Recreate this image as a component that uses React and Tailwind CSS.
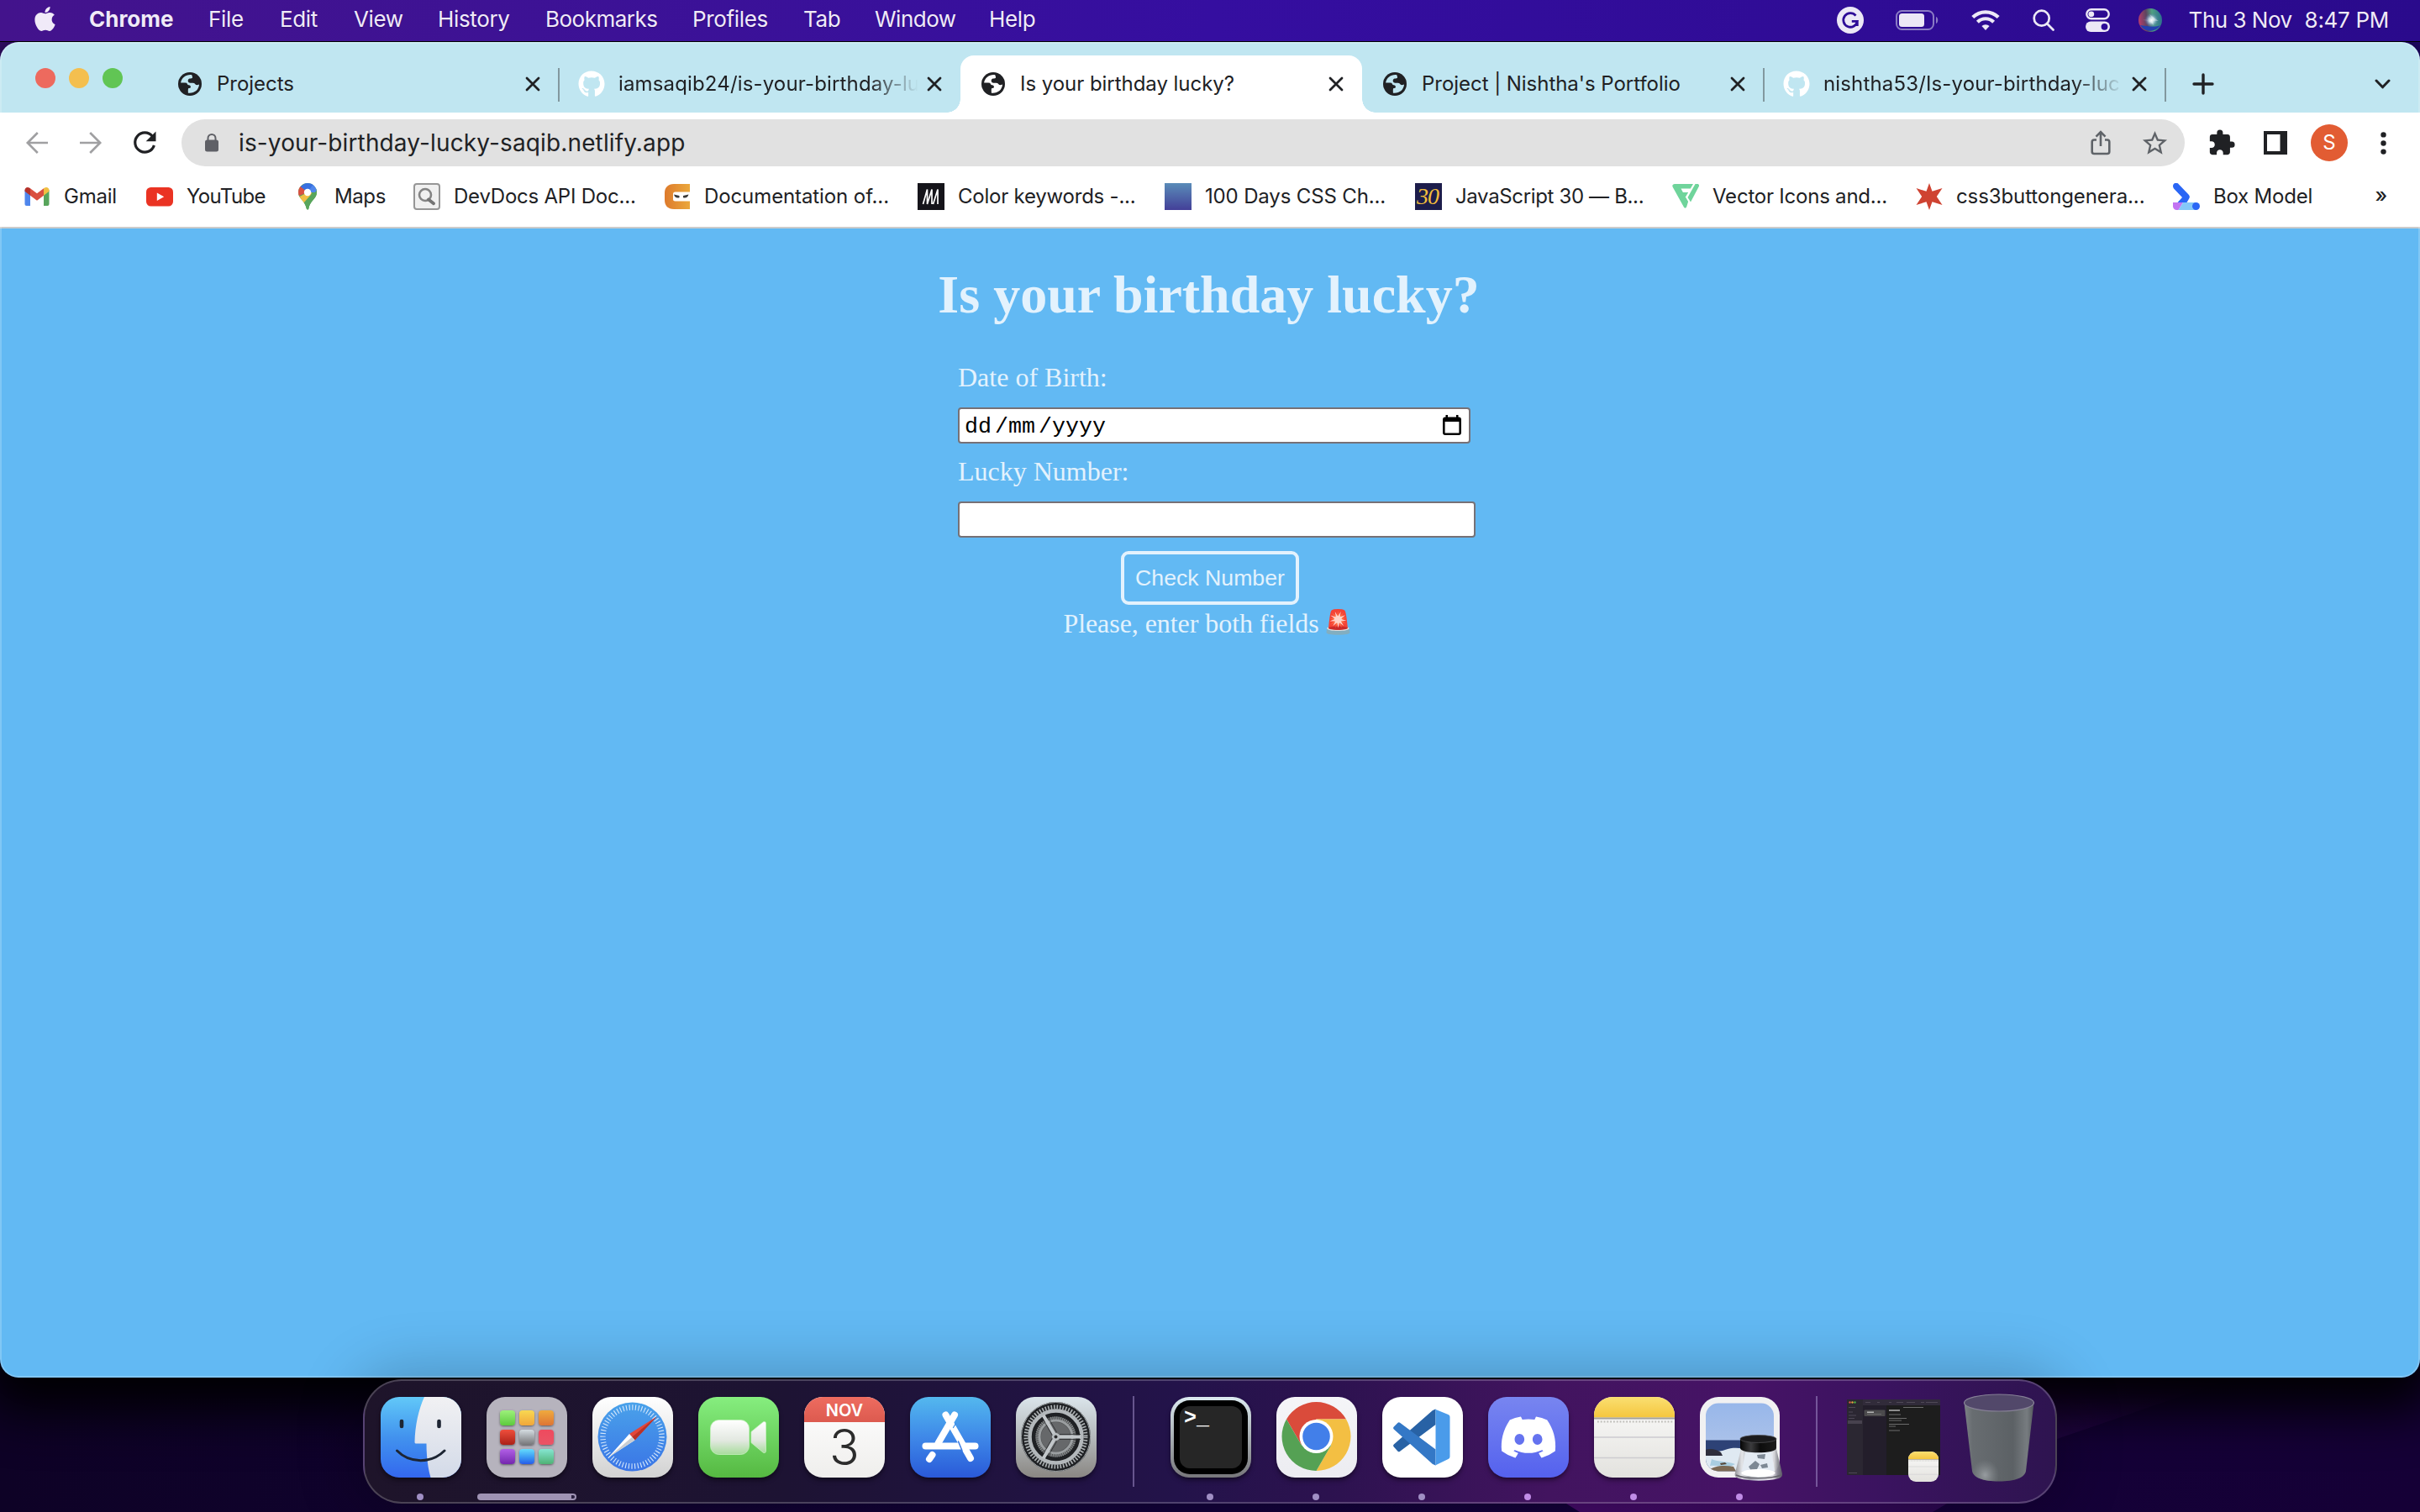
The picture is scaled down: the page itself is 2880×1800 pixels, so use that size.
import React from "react";
import { FaApple, FaGithub, FaDiscord } from "react-icons/fa";
import { MdStarBorder, MdExtension } from "react-icons/md";

/* ---------- menu bar ---------- */

const menus = [
  { label: "Chrome", box: "w-[142px] font-bold tracking-[0px]" },
  { label: "File", box: "w-[85px]" },
  { label: "Edit", box: "w-[88px]" },
  { label: "View", box: "w-[100px]" },
  { label: "History", box: "w-[128px]" },
  { label: "Bookmarks", box: "w-[175px] tracking-[-0.5px]" },
  { label: "Profiles", box: "w-[132px]" },
  { label: "Tab", box: "w-[85px]" },
  { label: "Window", box: "w-[136px] tracking-[-0.5px]" },
  { label: "Help", box: "w-[80px]" },
];

function MenuBar() {
  return (
    <header className="relative z-10 flex h-[50px] shrink-0 items-start border-b border-black bg-linear-to-r from-[#43138c] via-[#350ea0] to-[#2a0a8c] text-[26px] tracking-[-0.35px] text-[#f0eaf8] text-shadow-sm">
      <div className="flex h-[45px] w-[106px] shrink-0 items-center pl-[37px]">
        <FaApple className="size-[33px]" />
      </div>
      <nav className="flex h-[45px] items-center">
        {menus.map((m) => (
          <span key={m.label} className={m.box}>
            {m.label}
          </span>
        ))}
      </nav>
      <div className="ml-auto flex h-[47px] items-center pr-[37px]">
        <svg className="mr-[38px] size-8" viewBox="0 0 32 32">
          <circle cx="16" cy="16" r="16" fill="#ece8f6" />
          <path d="M22.5 10.6A8.3 8.3 0 1 0 24.3 17.4H17.8M24.3 17.4V23" fill="none" stroke="#2d0c97" strokeWidth="2.8" />
        </svg>
        <svg className="mr-[38px] h-6 w-[52px]" viewBox="0 0 52 24">
          <rect x="1" y="1" width="44" height="22" rx="6.5" fill="none" stroke="#8a7bc4" strokeWidth="2" />
          <rect x="4" y="4" width="30" height="16" rx="3.5" fill="#ece8f6" />
          <path d="M48 8c3 1 3 7 0 8z" fill="#8a7bc4" />
        </svg>
        <svg className="mr-[39px] h-[26px] w-[34px]" viewBox="0 0 34 26" fill="none" stroke="#ece8f6" strokeWidth="4.2">
          <path d="M1.8 9.6a21.5 21.5 0 0 1 30.4 0" />
          <path d="M7.4 15.2a13.6 13.6 0 0 1 19.2 0" />
          <path d="M17 25l-4.6-4.9a6.6 6.6 0 0 1 9.2 0z" fill="#ece8f6" stroke="none" />
        </svg>
        <svg className="mr-[37px] size-[26px]" viewBox="0 0 26 26" fill="none" stroke="#ece8f6" strokeWidth="2.7">
          <circle cx="10.7" cy="10.7" r="9" />
          <path d="M17.3 17.3l7.2 7.2" strokeLinecap="round" />
        </svg>
        <svg className="mr-[34px] h-7 w-[29px]" viewBox="0 0 29 28">
          <rect x="1.3" y="1.3" width="26.4" height="11" rx="5.5" fill="none" stroke="#ece8f6" strokeWidth="2.4" />
          <circle cx="6.8" cy="6.8" r="3.4" fill="#ece8f6" />
          <rect x="0" y="15.5" width="29" height="12.5" rx="6.2" fill="#ece8f6" />
          <circle cx="22.5" cy="21.8" r="3.9" fill="#2d0c97" />
        </svg>
        <svg className="mr-[32px] size-7" viewBox="0 0 28 28">
          <defs>
            <radialGradient id="siriCore" cx=".55" cy=".5" r=".3">
              <stop offset="0" stopColor="#fff" />
              <stop offset=".4" stopColor="#cfe3f0" stopOpacity=".8" />
              <stop offset="1" stopColor="#4a6ac0" stopOpacity="0" />
            </radialGradient>
            <linearGradient id="siriRim" x1="0" y1=".55" x2="1" y2=".45">
              <stop offset="0" stopColor="#b83c6c" />
              <stop offset=".35" stopColor="#5c4560" />
              <stop offset=".6" stopColor="#4fa082" />
              <stop offset="1" stopColor="#2c6f8e" />
            </linearGradient>
          </defs>
          <circle cx="14" cy="14" r="14" fill="url(#siriRim)" />
          <path d="M2 20a14 14 0 0 0 24 0c-6 3-16 1-24 0z" fill="#2440b0" />
          <circle cx="14" cy="14" r="14" fill="url(#siriCore)" />
          <path d="M5 14c5-1 8 0 13 6-1-6-2-9-5-13 6 4 9 7 11 8" fill="#fff" opacity=".35" />
        </svg>
        <span className="mr-[15px] tracking-[-0.5px]">Thu 3 Nov</span>
        <span className="tracking-[-0.3px]">8:47 PM</span>
      </div>
    </header>
  );
}

/* ---------- browser tabs ---------- */

function Globe() {
  return (
    <svg className="size-7" viewBox="0 0 28 28">
      <circle cx="14" cy="14" r="14" fill="#202124" />
      <path
        d="M16.2 3.2C9.6 2.4 4 6.5 3.1 12.6c2.2-.3 4.8-.2 7 .1.9.9.9 2.4 2.4 2.6 1.8.2 2.5.8 2.4 2.4-.1 1.2-1.3 1.3-2.600 1.300-.8 1.300-.4 3.600-.4 5.700 7 .9 12.800-3.700 13.100-10.200-1.300.4-2.400.9-3.700.5-1-.4-1.200-1.400-2.300-1.900-1.900-.5-4.500.2-6.300-.8-1.400-1-1.300-3.200-.1-4.300 1.300-.9 3.300-.1 4.300-1.200.5-1-.3-2.400-.6-3.600z"
        fill="currentColor"
      />
    </svg>
  );
}

function Cross() {
  return (
    <svg className="size-[18px] shrink-0" viewBox="0 0 18 18" stroke="#202124" strokeWidth="2.800" strokeLinecap="round">
      <path d="M2 2l14 14M16 2L2 16" />
    </svg>
  );
}

const tabs = [
  { title: "Projects", icon: "globe", rule: true },
  { title: "iamsaqib24/is-your-birthday-lu", icon: "github", fade: true },
  { title: "Is your birthday lucky?", icon: "globe", active: true },
  { title: "Project | Nishtha's Portfolio", icon: "globe", rule: true },
  { title: "nishtha53/Is-your-birthday-luc", icon: "github", fade: true, rule: true },
];

function Tab({ title, icon, active, fade, rule }) {
  return (
    <div
      className={
        "relative flex h-[68px] w-[478px] shrink-0 items-center pl-[23px] " +
        (active ? "rounded-t-2xl bg-white text-white" : "text-[#c0e6f1]")
      }
    >
      {active && (
        <>
          <i className="absolute bottom-0 -left-4 size-4 bg-[radial-gradient(circle_at_0_0,transparent_15.5px,white_16px)]" />
          <i className="absolute -right-4 bottom-0 size-4 bg-[radial-gradient(circle_at_100%_0,transparent_15.5px,white_16px)]" />
        </>
      )}
      <span className="flex w-8 shrink-0 items-center justify-center">
        {icon === "globe" ? <Globe /> : <FaGithub className="size-8 text-white" />}
      </span>
      <span
        className={
          "ml-4 w-[364px] shrink-0 text-2xl whitespace-nowrap text-[#202124] " +
          (fade ? "mask-r-from-82% mask-r-to-98% tracking-[0.15px]" : "tracking-[-0.04px]")
        }
      >
        {title}
      </span>
      <span className="ml-[3px] flex">
        <Cross />
      </span>
      {rule && <i className="absolute top-[15px] -right-[1px] h-10 w-0.5 bg-[#82989f]" />}
    </div>
  );
}

function TabStrip() {
  return (
    <div className="flex h-[84px] items-end bg-[#c0e6f1]">
      <div className="flex h-[84px] w-[187px] shrink-0 items-center gap-4 pt-[2px] pl-[42px]">
        <i className="size-6 rounded-full bg-[#ed6a5e]" />
        <i className="size-6 rounded-full bg-[#f4bf4f]" />
        <i className="size-6 rounded-full bg-[#61c554]" />
      </div>
      {tabs.map((t) => (
        <Tab key={t.title} {...t} />
      ))}
      <div className="flex h-[68px] grow items-center justify-between pr-[35px] pl-8">
        <svg className="size-[26px]" viewBox="0 0 26 26" stroke="#202124" strokeWidth="3.4" strokeLinecap="round">
          <path d="M13 2v22M2 13h22" />
        </svg>
        <svg className="h-3 w-[19px]" viewBox="0 0 19 12" fill="none" stroke="#202124" strokeWidth="3" strokeLinecap="round" strokeLinejoin="round">
          <path d="M2 2l7.500 7.800L17 2" />
        </svg>
      </div>
    </div>
  );
}

/* ---------- toolbar ---------- */

function Cell({ children }) {
  return <span className="flex w-16 shrink-0 items-center justify-center">{children}</span>;
}

function Toolbar() {
  return (
    <div className="flex h-[72px] items-center bg-white px-3">
      <Cell>
        <svg className="size-8" viewBox="0 0 32 32" fill="none" stroke="#a0a0a2" strokeWidth="2.6">
          <path d="M29 16H5M16.800 4L4.800 16l12 12" />
        </svg>
      </Cell>
      <Cell>
        <svg className="size-8" viewBox="0 0 32 32" fill="none" stroke="#a0a0a2" strokeWidth="2.6">
          <path d="M3 16h24M15.200 4l12 12-12 12" />
        </svg>
      </Cell>
      <Cell>
        <svg className="size-8" viewBox="0 0 32 32">
          <path d="M25.300 8.200A11.600 11.600 0 1 0 27.400 19" fill="none" stroke="#202124" strokeWidth="3.200" />
          <path d="M29.500 2.500v11.800H17.700z" fill="#202124" />
        </svg>
      </Cell>
      <div className="ml-3 flex h-14 w-[2384px] items-center rounded-full bg-[#e1e1e1] pr-1 pl-7">
        <svg className="h-[22px] w-4" viewBox="0 0 16 22">
          <path d="M3.500 9V5.500a4.500 4.500 0 0 1 9 0V9" fill="none" stroke="#5f6066" strokeWidth="2" />
          <rect y="7.500" width="16" height="14" rx="2.500" fill="#5f6066" />
        </svg>
        <span className="ml-6 grow text-[28px] tracking-[0.13px] text-[#202124]">is-your-birthday-lucky-saqib.netlify.app</span>
        <Cell>
          <svg className="h-8 w-6" viewBox="0 0 24 32" fill="none" stroke="#5f6368" strokeWidth="2.600">
            <path d="M7 12.500H4.200A2.500 2.500 0 0 0 1.700 15v11.500A2.500 2.500 0 0 0 4.200 29h15.600a2.500 2.500 0 0 0 2.500-2.500V15a2.500 2.500 0 0 0-2.500-2.500H17" />
            <path d="M12 20V3.500M6.500 8.600L12 3l5.500 5.600" />
          </svg>
        </Cell>
        <Cell>
          <MdStarBorder className="size-[35px] text-[#5f6368]" />
        </Cell>
      </div>
      <div className="ml-3 flex">
        <Cell>
          <MdExtension className="size-[34px] text-[#202124]" />
        </Cell>
        <Cell>
          <svg className="size-7" viewBox="0 0 28 28">
            <path d="M0 0h28v28H0zM4 4v20h15.500V4z" fill="#202124" fillRule="evenodd" />
          </svg>
        </Cell>
        <Cell>
          <span className="flex size-11 items-center justify-center rounded-full bg-[#e25c33] text-2xl text-white">S</span>
        </Cell>
        <Cell>
          <svg className="h-[27px] w-[7px]" viewBox="0 0 7 27" fill="#202124">
            <circle cx="3.500" cy="3.400" r="3.200" />
            <circle cx="3.500" cy="13.500" r="3.200" />
            <circle cx="3.500" cy="23.600" r="3.200" />
          </svg>
        </Cell>
      </div>
    </div>
  );
}

/* ---------- bookmarks ---------- */

const bookmarkIcons = {
  gmail: (
    <svg className="size-8" viewBox="0 0 32 32">
      <path d="M1.500 8v17a2 2 0 0 0 2 2H8V14z" fill="#4f86ec" />
      <path d="M30.500 8v17a2 2 0 0 1-2 2H24V14z" fill="#58a55c" />
      <path d="M1.500 8.500C1.500 5 5 4 7.300 5.800L8 6.300v8.400l-6.500-5z" fill="#b5312a" />
      <path d="M30.500 8.500C30.500 5 27 4 24.700 5.800L24 6.300v8.400l6.500-5z" fill="#f1bf42" />
      <path d="M8 6.300l8 6 8-6v8.400l-8 6-8-6z" fill="#d95040" />
    </svg>
  ),
  youtube: (
    <svg className="size-8" viewBox="0 0 32 32">
      <rect y="5" width="32" height="22.500" rx="5.500" fill="#ea3323" />
      <path d="M12.800 11.500l8.400 4.700-8.400 4.800z" fill="#fff" />
    </svg>
  ),
  maps: (
    <svg className="size-8" viewBox="0 0 32 32">
      <defs>
        <clipPath id="pin">
          <path d="M16 0a11 11 0 0 1 11 11c0 8-8.200 9.500-9.700 19.600-.3 1.600-2.300 1.600-2.600 0C13.200 20.500 5 19 5 11A11 11 0 0 1 16 0z" />
        </clipPath>
      </defs>
      <g clipPath="url(#pin)">
        <rect width="32" height="32" fill="#58a55c" />
        <path d="M4 16l12-5-8-8-6 3z" fill="#d95040" />
        <path d="M7.500 4L16 11 26 2 16-2z" fill="#3870e0" />
        <path d="M4 17.500L16 11l6-5-2 10-10 10z" fill="#f1bf42" />
        <path d="M28 5L11 24l5 8 12-8z" fill="#58a55c" />
        <path d="M16 11l7-10 7 3-5 7z" fill="#4f86ec" />
      </g>
      <circle cx="16" cy="11" r="4.200" fill="#fff" />
    </svg>
  ),
  devdocs: (
    <svg className="size-8" viewBox="0 0 32 32">
      <rect x="1" y="1" width="30" height="30" rx="3" fill="#f0f0f0" stroke="#969696" strokeWidth="2" />
      <circle cx="14" cy="14" r="7" fill="none" stroke="#848484" strokeWidth="2.600" />
      <path d="M18 19.500l6 4.800" stroke="#747474" strokeWidth="3.800" strokeLinecap="round" />
    </svg>
  ),
  ninja: (
    <svg className="size-8" viewBox="0 0 32 32">
      <defs>
        <linearGradient id="ninjaFill">
          <stop offset="0" stopColor="#dd7a2c" />
          <stop offset="1" stopColor="#eba83c" />
        </linearGradient>
      </defs>
      <path d="M31 1v9.500H13.500a2.500 2.500 0 0 0-2.500 2.500v6a2.500 2.500 0 0 0 2.500 2.500H31V31H12C5 31 1 27 1 20v-8C1 5 5 1 12 1z" fill="url(#ninjaFill)" />
      <path d="M12 13.500l6.500 1.500v2.200c-3.500.8-5.600-.4-6.500-3.700zM29.500 13.500L23 15v2.200c3.500.8 5.600-.4 6.500-3.700z" fill="#3b3b3b" />
    </svg>
  ),
  mdn: (
    <svg className="size-8" viewBox="0 0 32 32">
      <rect width="32" height="32" fill="#15141a" />
      <path d="M6.500 25l5-17.500v17.500L17 7.500V25M18.500 25L24 7.500V25" fill="none" stroke="#fff" strokeWidth="1.700" strokeLinejoin="bevel" />
    </svg>
  ),
  hundred: <i className="block size-8 bg-linear-to-b from-[#5a8cb8] to-[#433f98]" />,
  js30: (
    <span className="flex size-8 items-center justify-center bg-[#1d1d4b] pr-[2px] font-['Liberation_Serif'] text-[28px] leading-none tracking-[-1px] text-[#f2bd3b] italic">
      30
    </span>
  ),
  flaticon: (
    <svg className="size-8" viewBox="0 0 32 32" fill="#6fd49b">
      <path d="M3 1h22l-3.200 5.500H10.500l2.400 4.500h6.300l-3 5h-.6l3.500 6-2 6.500c-.6 1.500-2.600 1.500-3.200 0L.6 4.500C-.2 2.500 1 1 3 1z" />
      <path d="M27.500 1H30c1.800 0 2.400 1.500 1.800 3L22 22.500 18.500 17z" />
    </svg>
  ),
  spark: (
    <svg className="size-8" viewBox="0 0 32 32">
      <path d="M16 0l3.500 9.800L31.500 6l-6.700 10 6.700 10-12-3.800L16 32l-3.500-9.800L.5 26l6.700-10L.5 6l12 3.800z" fill="#cf4332" />
    </svg>
  ),
  box: (
    <svg className="size-8" viewBox="0 0 32 32">
      <path d="M0 23h12L6.500 32H4.500A4.500 4.500 0 0 1 0 27.500z" fill="#c274f2" />
      <path d="M12 23h15v9H6.500z" fill="#85c8f8" />
      <path d="M0 3.500C0-.5 5-1.500 7 1.500L18.500 13.500c1.700 1.700 1.700 3.500.5 5.200L16.500 23H5.500l5.500-6L1 6.500C.3 5.600 0 4.500 0 3.500z" fill="#2a66f5" />
      <circle cx="27.500" cy="27.500" r="4.500" fill="#2a66f5" />
    </svg>
  ),
};

const bookmarks = [
  { icon: "gmail", label: "Gmail", box: "w-[146px]" },
  { icon: "youtube", label: "YouTube", box: "w-[176px] tracking-[-0.65px]" },
  { icon: "maps", label: "Maps", box: "w-[142px] tracking-[-0.4px]" },
  { icon: "devdocs", label: "DevDocs API Doc...", box: "w-[298px]" },
  { icon: "ninja", label: "Documentation of...", box: "w-[302px] tracking-[-0.1px]" },
  { icon: "mdn", label: "Color keywords -...", box: "w-[294px]" },
  { icon: "hundred", label: "100 Days CSS Ch...", box: "w-[298px] tracking-[-0.15px]" },
  { icon: "js30", label: "JavaScript 30 — B...", box: "w-[306px] tracking-[-0.35px]" },
  { icon: "flaticon", label: "Vector Icons and...", box: "w-[290px]" },
  { icon: "spark", label: "css3buttongenera...", box: "w-[306px] tracking-[-0.1px]" },
  { icon: "box", label: "Box Model", box: "w-[200px]" },
];

function Bookmarks() {
  return (
    <div className="flex h-[66px] items-center border-b-2 border-[#cbcbcb] bg-white pr-[39px] pb-2 pl-7 text-2xl tracking-[-0.22px] text-[#202124]">
      {bookmarks.map((b) => (
        <span key={b.label} className={"flex shrink-0 items-center gap-4 whitespace-nowrap " + b.box}>
          {bookmarkIcons[b.icon]}
          {b.label}
        </span>
      ))}
      <span className="ml-auto pb-0.5 font-medium">»</span>
    </div>
  );
}

/* ---------- web page ---------- */

function Page() {
  return (
    <main className="flex h-[1368px] flex-col items-center bg-[#62b9f3] pt-[42px] font-['Liberation_Serif'] text-[32px] leading-9 text-[#e3f2fd]">
      <h1 className="pr-[3px] text-[64px] leading-[74px] font-bold">Is your birthday lucky?</h1>
      <form className="mt-[43px] flex w-[600px] flex-col items-start">
        <label>Date of Birth:</label>
        <div className="mt-[18px] flex h-[43px] w-[610px] items-center justify-between rounded-[4px] border-2 border-[#767176] bg-white pr-[9px] pl-1.5 text-black">
          <span className="flex items-baseline pt-[3px] font-['Liberation_Mono'] text-[26.67px] leading-none">
            <span className="w-[36px]">dd</span>
            <span className="w-[16px]">/</span>
            <span className="w-[36px]">mm</span>
            <span className="w-[16px]">/</span>
            <span>yyyy</span>
          </span>
          <svg className="mb-0.5 h-6 w-[22px]" viewBox="0 0 22 24">
            <path d="M3.500 0h2.500v2.500h10V0h2.500v2.500h.5a3 3 0 0 1 3 3V21a3 3 0 0 1-3 3H3a3 3 0 0 1-3-3V5.500a3 3 0 0 1 3-3h.5zM2.600 8v13.400h16.800V8z" fill="#000" fillRule="evenodd" />
          </svg>
        </div>
        <label className="mt-[15px]">Lucky Number:</label>
        <div className="mt-[18px] h-[43px] w-[616px] rounded-[4px] border-2 border-[#767176] bg-white" />
        <button
          type="button"
          className="mt-4 h-16 w-[212px] self-center rounded-[9px] border-4 border-[#e3f2fd] font-['Liberation_Sans'] text-[26.67px] leading-none"
        >
          Check Number
        </button>
      </form>
      <p className="mt-[3px] flex items-center pr-1 tracking-[-0.06px]">
        Please, enter both fields
        <span className="ml-[6px] w-[35px] pb-px font-['Noto_Color_Emoji'] text-[28px]">🚨</span>
      </p>
    </main>
  );
}

/* ---------- dock ---------- */

function Squircle({ className = "", children }) {
  return <div className={"size-24 shrink-0 overflow-hidden rounded-[22px] shadow-md shadow-black/40 " + className}>{children}</div>;
}

function Finder() {
  return (
    <Squircle className="bg-linear-to-b from-[#62c8f8] via-[#4292ee] to-[#3467ee]">
      <svg viewBox="0 0 96 96">
        <defs>
          <linearGradient id="faceLight" x1="0" y1="0" x2="0" y2="1">
            <stop offset="0" stopColor="#f1f1f3" />
            <stop offset="1" stopColor="#d3dae8" />
          </linearGradient>
        </defs>
        <path d="M52 0C45 15 41 34 40.500 53.500c0 1.500.5 2 2 2H54.500C54.500 70 56 84 59.500 96H96V0z" fill="url(#faceLight)" />
        <g stroke="#1d2533" fill="none" strokeLinecap="round">
          <path d="M25 29v6M69.500 29v6" strokeWidth="4.600" />
          <path d="M19.500 64c15 15.500 41 15.500 56.500 0" strokeWidth="3" />
        </g>
      </svg>
    </Squircle>
  );
}

const launchTiles = [
  "from-[#9cf07a] to-[#5ccb3c]",
  "from-[#f8d852] to-[#f0a63a]",
  "from-[#efaa3e] to-[#dd7434]",
  "from-[#ef4e3c] to-[#ac2018]",
  "from-[#d5dde2] to-[#77777a]",
  "from-[#ee4a5e] to-[#ea5466]",
  "from-[#b25fe6] to-[#7426ae]",
  "from-[#66dcfb] to-[#2a5ae8]",
  "from-[#86e6d2] to-[#4fb275]",
];

function Launchpad() {
  return (
    <Squircle className="grid grid-cols-[repeat(3,18px)] place-content-center gap-[5px] bg-[#b6b3bd]">
      {launchTiles.map((c) => (
        <i key={c} className={"size-[18px] rounded-[4px] bg-linear-to-b shadow-sm shadow-black/40 " + c} />
      ))}
    </Squircle>
  );
}

function Safari() {
  return (
    <Squircle className="bg-linear-to-b from-white to-[#d2d2d2]">
      <svg viewBox="0 0 96 96">
        <defs>
          <linearGradient id="compass" x1="0" y1="0" x2="0" y2="1">
            <stop offset="0" stopColor="#4aa2ea" />
            <stop offset="1" stopColor="#3a75e6" />
          </linearGradient>
        </defs>
        <circle cx="47.500" cy="47.500" r="41" fill="url(#compass)" />
        <circle cx="47.500" cy="47.500" r="35" fill="none" stroke="#d6e8fb" strokeWidth="6.500" strokeDasharray="1.100 2.555" />
        <path d="M76.500 23.500L44 44l6.500 7.500z" fill="#e2473b" />
        <path d="M76.500 23.500L47.200 47.700l3.300 3.800z" fill="#b93228" />
        <path d="M19 72L44 44l6.500 7.500z" fill="#fff" />
        <path d="M19 72l28.200-24.300 3.300 3.800z" fill="#c9cdd2" />
      </svg>
    </Squircle>
  );
}

function FaceTime() {
  return (
    <Squircle className="bg-linear-to-b from-[#86ee7f] to-[#55b941]">
      <svg viewBox="0 0 96 96">
        <defs>
          <linearGradient id="cam" x1="0" y1="0" x2="0" y2="1">
            <stop offset="0" stopColor="#fff" />
            <stop offset=".6" stopColor="#e2e8e0" />
            <stop offset="1" stopColor="#a7dc9c" />
          </linearGradient>
        </defs>
        <g fill="url(#cam)" stroke="#c8f0c0" strokeWidth=".8">
          <rect x="14.500" y="27.500" width="46" height="41" rx="10" />
          <path d="M63 41.500L77 30c1.500-1.200 3.500-.5 3.500 1.500v33c0 2-2 2.700-3.500 1.500L63 54.500z" />
        </g>
      </svg>
    </Squircle>
  );
}

function Calendar() {
  return (
    <Squircle className="flex flex-col items-center bg-linear-to-b from-white to-[#efeeec]">
      <div className="flex h-[30px] w-full items-center justify-center bg-linear-to-b from-[#ee6c60] to-[#dc5a4f] pt-[2px] text-[20px] font-semibold text-white">
        NOV
      </div>
      <div className="pt-px text-[59px] leading-[58px] font-light text-[#2c2c2c]">3</div>
    </Squircle>
  );
}

function AppStore() {
  return (
    <Squircle className="bg-linear-to-b from-[#54b8ee] via-[#3f88e8] to-[#2b59d8]">
      <svg viewBox="0 0 96 96" fill="none" stroke="#fff" strokeWidth="8" strokeLinecap="round">
        <path d="M42.500 21.500L72 73" />
        <path d="M18.500 58.500h59" />
        <path d="M57.500 53l4.500 11" stroke="#3a7ae2" strokeWidth="1.500" />
        <path d="M33.500 55L53 21.500" />
        <path d="M26.500 69l-3.500 5" />
        <path d="M51.500 36.500l3-5" stroke="#3f8fe6" strokeWidth="1.200" />
      </svg>
    </Squircle>
  );
}

function Settings() {
  return (
    <Squircle className="bg-linear-to-b from-[#dbe5eb] via-[#b4b9bb] to-[#8a8783]">
      <svg viewBox="0 0 96 96" fill="none">
        <circle cx="47.500" cy="47.500" r="41.500" fill="#1f2124" />
        <circle cx="47.500" cy="47.500" r="41" stroke="#a0a5a8" strokeWidth="1" />
        <circle cx="47.500" cy="47.500" r="35.500" stroke="#a9aeb0" strokeWidth="5" strokeDasharray="1.700 1.800" />
        <circle cx="47.500" cy="47.500" r="31" stroke="#b3b8bb" strokeWidth="4.500" />
        <circle cx="47.500" cy="47.500" r="24" fill="#4f5152" />
        <circle cx="47.500" cy="47.500" r="22.500" stroke="#8b8f91" strokeWidth="3.500" strokeDasharray="1.200 1.156" />
        <circle cx="47.500" cy="47.500" r="19.500" stroke="#9a9ea0" strokeWidth="3" />
        <circle cx="47.500" cy="47.500" r="17.500" fill="#66686a" />
        <g stroke="#c2c7ca" strokeWidth="4">
          <path d="M47.500 47.500H77M47.500 47.500L32.700 21.900M47.500 47.500L32.700 73.100" />
        </g>
        <g stroke="#1f2124" strokeWidth="1" opacity=".7">
          <path d="M52 50.500h25M52 44.500h25M43.500 46L31 24.500M43.500 49L31 70.500M48.500 42L37 22M48.500 53L37 73" />
        </g>
        <circle cx="47.500" cy="47.500" r="4.500" fill="#b9bec1" />
        <circle cx="47.500" cy="47.500" r="2" fill="#2a2b2d" />
      </svg>
    </Squircle>
  );
}

function Terminal() {
  return (
    <Squircle className="bg-linear-to-b from-[#dceaf0] to-[#77777a] p-1">
      <div className="size-full rounded-[19px] bg-black p-[7px]">
        <div className="size-full rounded-[12px] bg-[#262626] pt-px pl-[5px] font-['Liberation_Mono'] text-[25px] leading-[28px] font-bold text-white">
          &gt;_
        </div>
      </div>
    </Squircle>
  );
}

function ChromeIcon() {
  return (
    <Squircle className="bg-linear-to-b from-[#f5f5f8] to-[#ececf1]">
      <svg viewBox="0 0 96 96">
        <path d="M12 26.500A41 41 0 0 1 83 26.500L47.500 26.500 29.750 57.250z" fill="#da4b3b" />
        <path d="M83 26.500A41 41 0 0 1 47.500 88L65.250 57.250 47.500 26.500z" fill="#f3bf43" />
        <path d="M47.500 88A41 41 0 0 1 12 26.500L29.750 57.250H65.250z" fill="#55a154" />
        <circle cx="47.500" cy="47" r="20" fill="#fff" />
        <circle cx="47.500" cy="47" r="16.300" fill="#427fe9" />
      </svg>
    </Squircle>
  );
}

function VsCode() {
  return (
    <Squircle className="bg-white">
      <svg viewBox="0 0 96 96">
        <path d="M63.500 14.500L60 16 13.800 56.500a2 2 0 0 0 0 3l4.500 5a2 2 0 0 0 2.800.3L63.500 33z" fill="#2862a5" />
        <path d="M63.500 81.500L60 80 13.800 38.500a2 2 0 0 1 0-3l4.500-4.500a2 2 0 0 1 2.800-.3L63.500 62.500z" fill="#3478c6" />
        <path d="M62.500 14.500l16 6.500a3 3 0 0 1 2 2.800v47.500a3 3 0 0 1-2 2.700l-16 7.800c1-.5 1-1.500 1-2.500V17c0-1-.2-2-1-2.500z" fill="#4a9bea" />
      </svg>
    </Squircle>
  );
}

function Discord() {
  return (
    <Squircle className="flex items-center justify-center bg-linear-to-b from-[#7885f0] to-[#5561ee]">
      <FaDiscord className="h-[58px] w-[70px] text-white" />
    </Squircle>
  );
}

function NotesArt() {
  return (
    <svg viewBox="0 0 96 96">
      <defs>
        <linearGradient id="noteTop" x1="0" y1="0" x2="0" y2="1">
          <stop offset="0" stopColor="#fadf72" />
          <stop offset="1" stopColor="#f5c63d" />
        </linearGradient>
        <linearGradient id="notePaper" x1="0" y1="0" x2="0" y2="1">
          <stop offset="0" stopColor="#fbfbfa" />
          <stop offset="1" stopColor="#e3e2de" />
        </linearGradient>
      </defs>
      <rect width="96" height="96" fill="url(#notePaper)" />
      <rect width="96" height="24.500" fill="url(#noteTop)" />
      <path d="M0 25.500h96" stroke="#a4a19a" strokeWidth="2" />
      <path d="M4 29.500h90" stroke="#bdbcb8" strokeWidth="2" strokeDasharray="1.800 2" />
      <path d="M0 48h96M0 72.500h96" stroke="#cdccd0" strokeWidth="1.600" />
    </svg>
  );
}

function Notes() {
  return (
    <Squircle>
      <NotesArt />
    </Squircle>
  );
}

function Preview() {
  return (
    <svg className="size-24 overflow-visible" viewBox="0 0 96 96">
      <defs>
        <clipPath id="photo">
          <rect x="7" y="7.500" width="81" height="81" rx="15" />
        </clipPath>
        <linearGradient id="sky" x1="0" y1="0" x2="0" y2="1">
          <stop offset="0" stopColor="#94b5ea" />
          <stop offset="1" stopColor="#bccbe9" />
        </linearGradient>
        <linearGradient id="glass">
          <stop offset="0" stopColor="#8d8d92" />
          <stop offset=".15" stopColor="#e4e5e8" />
          <stop offset=".3" stopColor="#a9adb4" />
          <stop offset=".5" stopColor="#dfe4ea" />
          <stop offset=".8" stopColor="#f0f0f2" />
          <stop offset=".9" stopColor="#8f9097" />
          <stop offset="1" stopColor="#5d5d66" />
        </linearGradient>
        <linearGradient id="lid">
          <stop offset="0" stopColor="#050505" />
          <stop offset=".3" stopColor="#3c3c3e" />
          <stop offset=".55" stopColor="#0c0c0c" />
          <stop offset="1" stopColor="#1c1c1c" />
        </linearGradient>
      </defs>
      <rect width="95" height="96" rx="22" fill="#f1f1f2" />
      <g clipPath="url(#photo)">
        <rect width="96" height="96" fill="url(#sky)" />
        <rect y="51.500" width="96" height="45" fill="#2d4276" />
        <path d="M0 66c10-3 20 1 30-3s20-2 30 0l20 3v31H0z" fill="#dfe9f2" />
        <path d="M7 63c6-2 12-1 18 3l2 4H7z" fill="#2f2e3c" />
        <path d="M14 74c8 4 18 2 28 6l-6 3c-9 1-16-2-24-1z" fill="#a9cde0" />
        <path d="M10 88c6-6 18-7 30-5l4 7H10z" fill="#7c6a55" />
        <path d="M24 79l6-1 2 2-7 1z" fill="#57493c" />
      </g>
      <path d="M49 62h42l7 29c.6 3-1 5-4 6-14 3.500-34 3.500-48 0-3.500-1-5-3-4.200-6z" fill="url(#glass)" opacity=".93" />
      <path d="M54 66h31l4 22H50z" fill="#e4ebf3" />
      <path d="M58 83l8-7 5 4-3 6-7 2zM68 69l10-1-1 6-8-1zM72 81l8-2 1 5-7 1z" fill="#7d8894" />
      <ellipse cx="69.500" cy="90.500" rx="20" ry="4.500" fill="#fff" />
      <path d="M43 93c10 5 42 5 54 0" fill="none" stroke="#65656c" strokeWidth="1.500" />
      <path d="M48 50v11c0 7 43 7 43 0V50z" fill="url(#lid)" />
      <ellipse cx="69.500" cy="50" rx="21.500" ry="4.500" fill="#1b1b1d" stroke="#4c4c50" strokeWidth=".8" />
    </svg>
  );
}

function MinimisedNotes() {
  return (
    <div className="relative mt-[3px] h-[90px] w-[111px]">
      <svg className="size-full" viewBox="0 0 111 90">
        <rect width="111" height="90" fill="#1d1d1d" />
        <rect width="111" height="7" fill="#312b3a" />
        <rect width="19" height="90" fill="#2b2732" />
        <rect x="19" y="7" width="28" height="83" fill="#231e2b" />
        <circle cx="3.500" cy="3.500" r="1.200" fill="#e0564c" />
        <circle cx="6.500" cy="3.500" r="1.200" fill="#dda73c" />
        <circle cx="9.500" cy="3.500" r="1.200" fill="#4eaf42" />
        <rect x="1" y="25" width="17" height="4" fill="#47424e" />
        <rect x="20.500" y="12.500" width="25" height="7.500" rx="1" fill="#4b4a4c" />
        <path d="M24 15.300h8M50 13h13" stroke="#b4b4b4" strokeWidth="1.400" />
        <path d="M24 17.500h17M50 18h14M50 22.500h21M50 25h15M50 29.500h24M50 32h8M50 37h13M67 9.500h24" stroke="#6c6c6c" strokeWidth="1" />
        <path d="M22 3.500h6M36 3.500h3M50 3.500h3M59 3.500h8M71 3.500h10M88 3.500h4M94 3.500h14M2 9.500h8M2 15h5M2 19h9M2 22.500h7M2 87.500h10" stroke="#4e4856" strokeWidth="1" />
      </svg>
      <div className="absolute right-0.5 -bottom-2 size-9 overflow-hidden rounded-[9px]">
        <NotesArt />
      </div>
    </div>
  );
}

function Trash() {
  return (
    <svg className="h-[106px] w-[84px]" viewBox="0 0 84 106">
      <defs>
        <linearGradient id="bin">
          <stop offset="0" stopColor="#7d8286" />
          <stop offset=".12" stopColor="#686d71" />
          <stop offset=".7" stopColor="#5c6165" />
          <stop offset=".9" stopColor="#777c80" />
          <stop offset="1" stopColor="#54585d" />
        </linearGradient>
        <radialGradient id="binGlow" cx=".3" cy=".92" r=".2">
          <stop offset="0" stopColor="#a4a9ad" stopOpacity=".8" />
          <stop offset="1" stopColor="#8a8f92" stopOpacity="0" />
        </radialGradient>
      </defs>
      <path d="M.5 11L10 92c1 8 13 12.500 32 12.500S73 100 74 92L83.500 11z" fill="url(#bin)" />
      <path d="M.5 11L10 92c1 8 13 12.500 32 12.500S73 100 74 92L83.500 11z" fill="url(#binGlow)" />
      <ellipse cx="42" cy="11" rx="41.500" ry="10" fill="#52486a" stroke="#868096" strokeWidth="1.200" />
    </svg>
  );
}

const dockGroups = [
  [
    { id: "finder", art: <Finder />, mark: "dot" },
    { id: "launchpad", art: <Launchpad />, mark: "bar" },
    { id: "safari", art: <Safari /> },
    { id: "facetime", art: <FaceTime /> },
    { id: "calendar", art: <Calendar /> },
    { id: "appstore", art: <AppStore /> },
    { id: "settings", art: <Settings /> },
  ],
  [
    { id: "terminal", art: <Terminal />, mark: "dot" },
    { id: "chrome", art: <ChromeIcon />, mark: "dot" },
    { id: "vscode", art: <VsCode />, mark: "dot" },
    { id: "discord", art: <Discord />, mark: "bright" },
    { id: "notes", art: <Notes />, mark: "bright" },
    { id: "preview", art: <Preview />, mark: "bright" },
  ],
  [
    { id: "window", art: <MinimisedNotes /> },
    { id: "trash", art: <Trash />, lift: true },
  ],
];

const marks = {
  dot: "mr-0.5 size-2 bg-[#a08fc4]",
  bright: "mr-0.5 size-2 bg-[#c08ce6]",
  bar: "h-2 w-[118px] bg-[#9f93b4]",
};

function Dock() {
  return (
    <footer className="relative mx-auto mt-[2px] flex h-[148px] w-[2016px] shrink-0 rounded-[46px] border-2 border-white/20 bg-[linear-gradient(to_right,#1e142a_0%,#1d1333_25%,#23134a_48%,#2c124f_57%,#42145f_70%,#461366_82%,#3a135f_90%,#2e1450_100%)] pl-1 shadow-[0_0_70px_10px_rgba(0,0,0,0.22)]">
      {dockGroups.map((group, g) => (
        <React.Fragment key={g}>
          {g > 0 && (
            <div className={"flex shrink-0 justify-center pt-[18px] " + (g === 1 ? "w-[58px]" : "w-14")}>
              <i className="h-[108px] w-0.5 bg-[#a08cc8]/55" />
            </div>
          )}
          {group.map((item) => (
            <div key={item.id} className={"flex w-[126px] shrink-0 flex-col items-center " + (item.lift ? "pt-[15px]" : "pt-[19px]")}>
              {item.art}
              {item.mark && (
                <i className={"mt-[19px] flex items-center justify-end rounded-full pr-0.5 " + marks[item.mark]}>
                  {item.mark === "bar" && <b className="h-1 w-1 rounded-r-full bg-[#2a2140]" />}
                </i>
              )}
            </div>
          ))}
        </React.Fragment>
      ))}
    </footer>
  );
}

function Wallpaper() {
  return (
    <div className="absolute inset-0 bg-linear-to-r from-[#0e0226] via-[#13033a] to-[#150036]">
      <i className="absolute top-0 left-0 h-20 w-full bg-linear-to-r from-[#43138c] to-[#2a0a8c]" />
      <svg className="absolute bottom-0 left-0 h-40 w-full" viewBox="0 0 2880 160">
        <defs>
          <linearGradient id="ridge">
            <stop offset="0" stopColor="#4a0c6c" />
            <stop offset=".4" stopColor="#3b0a60" />
            <stop offset=".75" stopColor="#240648" />
            <stop offset="1" stopColor="#150036" />
          </linearGradient>
        </defs>
        <path d="M1700 0H2660L2448 73 2300 160H1880L1864 150z" fill="url(#ridge)" />
      </svg>
    </div>
  );
}

export default function App() {
  return (
    <div className="relative flex h-[1800px] w-[2880px] flex-col overflow-hidden bg-[#0e0226] font-[Inter,sans-serif]">
      <Wallpaper />
      <MenuBar />
      <section className="relative h-[1590px] shrink-0 overflow-hidden rounded-[22px] shadow-[0_20px_60px_20px_rgba(0,0,0,0.95)] after:pointer-events-none after:absolute after:inset-0 after:rounded-[22px] after:border-2 after:border-white/20">
        <TabStrip />
        <Toolbar />
        <Bookmarks />
        <Page />
      </section>
      <Dock />
    </div>
  );
}
